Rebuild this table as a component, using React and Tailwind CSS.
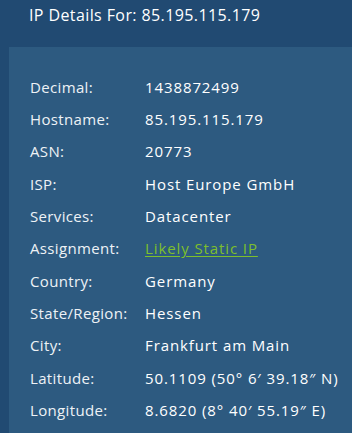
import React from "react";

const rows = [
  ["Decimal:", "1438872499"],
  ["Hostname:", "85.195.115.179"],
  ["ASN:", "20773"],
  ["ISP:", "Host Europe GmbH"],
  ["Services:", "Datacenter"],
  ["Assignment:", "Likely Static IP", true],
  ["Country:", "Germany"],
  ["State/Region:", "Hessen"],
  ["City:", "Frankfurt am Main"],
  ["Latitude:", "50.1109 (50° 6′ 39.18″ N)"],
  ["Longitude:", "8.6820 (8° 40′ 55.19″ E)"],
];

export default function App() {
  return (
    <div className="w-[352px] h-[433px] overflow-hidden bg-[#214a72] text-white font-['Open_Sans',sans-serif]">
      <div className="h-[47px] pl-[29px] pt-[3px] text-[16px] leading-[24px] tracking-[0.4px]">IP Details For: 85.195.115.179</div>
      <div className="ml-[9px] h-[386px] bg-[#2d5a80] pt-[24px] pl-[21px]">
        {rows.map(([label, value, link]) => (
          <div key={label} className="flex items-center h-[32.3px] text-[15px]">
            <span className="w-[115px] text-[#eef2f6] tracking-[0.35px]">{label}</span>
            {link ? (
              <a href="#" className="text-[#7dbf2c] underline underline-offset-2 tracking-[0.9px]">{value}</a>
            ) : (
              <span className="tracking-[0.9px]">{value}</span>
            )}
          </div>
        ))}
      </div>
    </div>
  );
}
